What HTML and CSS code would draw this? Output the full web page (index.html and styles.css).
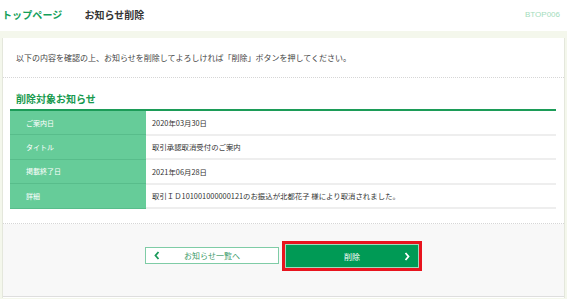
FILE: index.html
```html
<!DOCTYPE html>
<html lang="ja">
<head>
<meta charset="utf-8">
<link rel="stylesheet" href="styles.css">
</head>
<body>
<header class="topbar">
  <div class="crumbs">
    <span class="home">トップページ</span>
    <span class="page">お知らせ削除</span>
  </div>
  <span class="code">BTOP006</span>
</header>
<main class="panel">
  <p class="lead">以下の内容を確認の上、お知らせを削除してよろしければ「削除」ボタンを押してください。</p>
  <section class="section">
    <h2 class="heading">削除対象お知らせ</h2>
    <table class="info">
      <tr><th>ご案内日</th><td>2020年03月30日</td></tr>
      <tr><th>タイトル</th><td>取引承認取消受付のご案内</td></tr>
      <tr><th>掲載終了日</th><td>2021年06月28日</td></tr>
      <tr><th>詳細</th><td>取引ＩＤ101001000000121のお振込が北都花子 様により取消されました。</td></tr>
    </table>
  </section>
  <div class="actions">
    <button class="btn btn-back" type="button">
      <svg class="chev" width="6" height="9" viewBox="0 0 6 9"><polyline points="4.5,1 1.5,4.5 4.5,8" fill="none" stroke="#1a9a5a" stroke-width="1.8"/></svg>
      <span>お知らせ一覧へ</span>
    </button>
    <div class="focus">
      <button class="btn btn-delete" type="button">
        <span>削除</span>
        <svg class="chev" width="6" height="9" viewBox="0 0 6 9"><polyline points="1.5,1 4.5,4.5 1.5,8" fill="none" stroke="#ffffff" stroke-width="1.8"/></svg>
      </button>
    </div>
  </div>
</main>
</body>
</html>
```

FILE: styles.css
```css
* { box-sizing: border-box; }
html, body { margin: 0; padding: 0; }
body {
  background: #f4f7ec;
  font-family: "Noto Sans CJK JP", "Noto Sans", sans-serif;
  color: #333;
  height: 299px;
  overflow: hidden;
}
.topbar {
  height: 31px;
  background: #fff;
  display: flex;
  align-items: center;
  justify-content: space-between;
  padding: 0 7px 3px 2px;
}
.crumbs { display: flex; align-items: center; gap: 22px; }
.home { color: #14a05a; font-weight: bold; font-size: 10px; letter-spacing: 0.1px; }
.page { color: #333; font-weight: bold; font-size: 10px; }
.code { color: #a3dcbc; font-size: 8px; font-family: "Liberation Sans", Arial, sans-serif; }
.panel {
  margin: 7px 2px 0;
  background: #fff;
  border-left: 1px solid #e4e7dc;
  border-right: 1px solid #e4e7dc;
  height: 260px;
}
.lead {
  margin: 0;
  height: 40px;
  padding: 14px 0 0 13px;
  font-size: 8px;
  color: #444;
  border-bottom: 1px dotted #d6d6d6;
}
.section { padding: 0 8px 14px 7px; border-bottom: 1px dotted #d6d6d6; }
.heading {
  margin: 0;
  height: 31px;
  padding: 13px 0 0 6px;
  font-size: 10px;
  font-weight: bold;
  color: #16994d;
}
.info {
  width: 100%;
  border-collapse: collapse;
  border-top: 2px solid #1c9c58;
  font-size: 7.4px;
}
.info th, .info td { height: 24.5px; padding: 0; vertical-align: middle; }
.info th {
  width: 136px;
  background: #66cc99;
  color: #fff;
  font-weight: normal;
  font-size: 7px;
  text-align: left;
  padding-left: 16px;
  border-bottom: 1px solid #58bd8b;
}
.info td {
  padding-left: 6px;
  color: #333;
  border-bottom: 2px solid #eeeeee;
}
.actions {
  background: #f8f8f8;
  height: 73px;
  padding-top: 17px;
  display: flex;
  justify-content: center;
  align-items: flex-start;
  gap: 3px;
  border-bottom: 1px solid #dedede;
}
.btn {
  font-family: inherit;
  font-size: 8px;
  width: 134px;
  display: flex;
  align-items: center;
  justify-content: center;
  position: relative;
  padding: 0;
  cursor: pointer;
}
.btn-back {
  margin-top: 6px;
  height: 17px;
  background: #fff;
  border: 1px solid #7fcca6;
  color: #3a9a68;
}
.btn-back .chev { position: absolute; left: 8px; top: 3px; }
.focus { border: 3px solid #e8141e; }
.btn-delete {
  height: 24px;
  background: #009a55;
  border: 1px solid #9fd9bc;
  color: #fff;
}
.btn-delete .chev { position: absolute; right: 8px; top: 7px; }
```
